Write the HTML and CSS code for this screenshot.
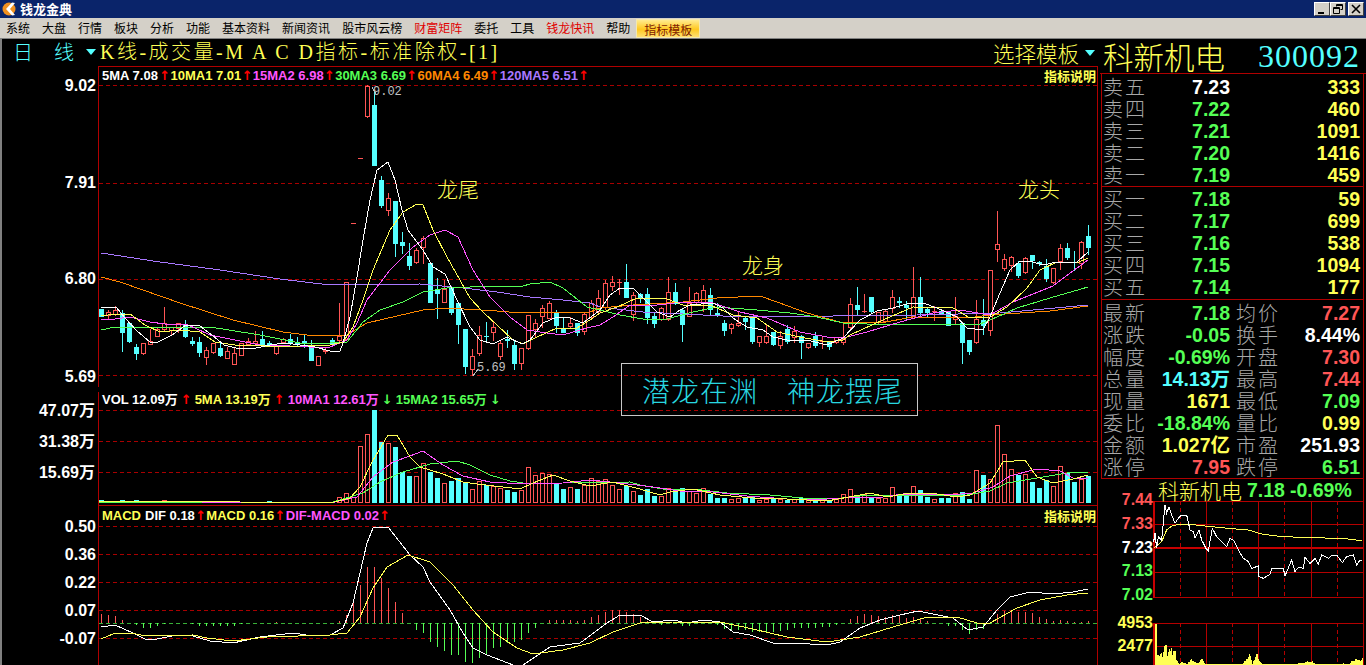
FILE: index.html
```html
<!DOCTYPE html>
<html lang="zh-CN">
<head>
<meta charset="utf-8">
<title>钱龙金典</title>
<link rel="stylesheet" href="styles.css">
</head>
<body>
<div class="app">
  <header class="titlebar">
    <svg class="logo" width="14" height="16" viewBox="0 0 14 16"><circle cx="7" cy="8" r="6.5" fill="#f09020"/><path d="M10 1.5 L4 8 L10 14.5 L13 14 L8 8 L13 2 Z" fill="#fff"/></svg>
    <span class="apptitle">钱龙金典</span>
    <div class="winbtns">
      <span class="winbtn"><svg width="10" height="10" viewBox="0 0 10 10"><rect x="1" y="8" width="6" height="2" fill="#000"/></svg></span>
      <span class="winbtn"><svg width="10" height="10" viewBox="0 0 10 10"><path d="M3.5 2.5V.5h6v5h-2M.5 3.5h6v6h-6zM.5 4.5h6M3.5 1.5h6" fill="none" stroke="#000"/></svg></span>
      <span class="winbtn wingap"><svg width="10" height="10" viewBox="0 0 10 10"><path d="M1 1L9 9M9 1L1 9" stroke="#000" stroke-width="1.6"/></svg></span>
    </div>
  </header>
  <nav class="menubar">
    <span>系统</span><span>大盘</span><span>行情</span><span>板块</span><span>分析</span><span>功能</span><span>基本资料</span><span>新闻资讯</span><span>股市风云榜</span><span class="hot">财富矩阵</span><span>委托</span><span>工具</span><span class="hot">钱龙快讯</span><span>帮助</span><span class="tplbtn">指标模板</span>
  </nav>
  <main class="main">
    <section class="left">
      <div class="charthead">
        <span class="period"><span>日</span><span>线</span></span>
        <i class="tri"></i>
        <span class="charttitle">K线-成交量-M A C D指标-标准除权-[1]</span>
        <span class="tplpick">选择模板</span>
        <i class="tri tri-r"></i>
      </div>
      <div class="pane pane-k">
        <svg id="kline" class="plot" width="1098" height="326" viewBox="0 66 1098 326"></svg>
        <span class="tick" style="top:10px">9.02</span>
        <span class="tick" style="top:107px">7.91</span>
        <span class="tick" style="top:203px">6.80</span>
        <span class="tick" style="top:301px">5.69</span>
        <div class="legend legend-k">
          <span class="c-w">5MA 7.08</span><b class="up">↑</b>
          <span class="c-y">10MA1 7.01</span><b class="up">↑</b>
          <span class="c-m">15MA2 6.98</span><b class="up">↑</b>
          <span class="c-g">30MA3 6.69</span><b class="up">↑</b>
          <span class="c-o">60MA4 6.49</span><b class="up">↑</b>
          <span class="c-p">120MA5 6.51</span><b class="up">↑</b>
        </div>
        <span class="explain explain-k">指标说明</span>
        <span class="extreme ext-hi">9.02</span>
        <span class="extreme ext-lo">5.69</span>
        <span class="note note-tail">龙尾</span>
        <span class="note note-body">龙身</span>
        <span class="note note-head">龙头</span>
        <div class="banner"><span>潜龙在渊</span><span>神龙摆尾</span></div>
      </div>
      <div class="pane pane-v">
        <svg id="vol" class="plot" width="1098" height="114" viewBox="0 392 1098 114"></svg>
        <span class="tick" style="top:9px">47.07万</span>
        <span class="tick" style="top:40px">31.38万</span>
        <span class="tick" style="top:71px">15.69万</span>
        <div class="legend legend-v">
          <span class="c-w">VOL 12.09万</span><b class="up">↑</b>
          <span class="c-y">5MA 13.19万</span><b class="up">↑</b>
          <span class="c-m">10MA1 12.61万</span><b class="dn">↓</b>
          <span class="c-g">15MA2 15.65万</span><b class="dn">↓</b>
        </div>
      </div>
      <div class="pane pane-m">
        <svg id="macd" class="plot" width="1098" height="159" viewBox="0 506 1098 159"></svg>
        <span class="tick" style="top:11px">0.50</span>
        <span class="tick" style="top:39px">0.36</span>
        <span class="tick" style="top:67px">0.22</span>
        <span class="tick" style="top:95px">0.07</span>
        <span class="tick" style="top:123px">-0.07</span>
        <div class="legend legend-m">
          <span class="c-y">MACD</span><span class="c-w">DIF 0.18</span><b class="up">↑</b>
          <span class="c-y">MACD 0.16</span><b class="up">↑</b>
          <span class="c-m">DIF-MACD 0.02</span><b class="up">↑</b>
        </div>
        <span class="explain explain-m">指标说明</span>
      </div>
    </section>
    <aside class="right">
      <div class="stockhead"><span class="stockname">科新机电</span><span class="stockcode">300092</span></div>
      <div class="quote q-sell">
        <div class="row"><span class="lb">卖五</span><span class="px c-w">7.23</span><span class="qty c-y">333</span></div>
        <div class="row"><span class="lb">卖四</span><span class="px c-g">7.22</span><span class="qty c-y">460</span></div>
        <div class="row"><span class="lb">卖三</span><span class="px c-g">7.21</span><span class="qty c-y">1091</span></div>
        <div class="row"><span class="lb">卖二</span><span class="px c-g">7.20</span><span class="qty c-y">1416</span></div>
        <div class="row"><span class="lb">卖一</span><span class="px c-g">7.19</span><span class="qty c-y">459</span></div>
      </div>
      <div class="quote q-buy">
        <div class="row"><span class="lb">买一</span><span class="px c-g">7.18</span><span class="qty c-y">59</span></div>
        <div class="row"><span class="lb">买二</span><span class="px c-g">7.17</span><span class="qty c-y">699</span></div>
        <div class="row"><span class="lb">买三</span><span class="px c-g">7.16</span><span class="qty c-y">538</span></div>
        <div class="row"><span class="lb">买四</span><span class="px c-g">7.15</span><span class="qty c-y">1094</span></div>
        <div class="row"><span class="lb">买五</span><span class="px c-g">7.14</span><span class="qty c-y">177</span></div>
      </div>
      <div class="quote q-info">
        <div class="row"><span class="lb">最新</span><span class="px c-g">7.18</span><span class="lb lb2">均价</span><span class="px c-r">7.27</span></div>
        <div class="row"><span class="lb">涨跌</span><span class="px c-g">-0.05</span><span class="lb lb2">换手</span><span class="px c-w">8.44%</span></div>
        <div class="row"><span class="lb">幅度</span><span class="px c-g">-0.69%</span><span class="lb lb2">开盘</span><span class="px c-r">7.30</span></div>
        <div class="row"><span class="lb">总量</span><span class="px c-c">14.13万</span><span class="lb lb2">最高</span><span class="px c-r">7.44</span></div>
        <div class="row"><span class="lb">现量</span><span class="px c-y">1671</span><span class="lb lb2">最低</span><span class="px c-g">7.09</span></div>
        <div class="row"><span class="lb">委比</span><span class="px c-g">-18.84%</span><span class="lb lb2">量比</span><span class="px c-y">0.99</span></div>
        <div class="row"><span class="lb">金额</span><span class="px c-y">1.027亿</span><span class="lb lb2">市盈</span><span class="px c-w">251.93</span></div>
        <div class="row"><span class="lb">涨停</span><span class="px c-r">7.95</span><span class="lb lb2">跌停</span><span class="px c-g">6.51</span></div>
      </div>
      <div class="mini">
        <div class="minihead"><span class="mininame">科新机电</span><span class="c-g miniprice">7.18</span><span class="c-g miniprice">-0.69%</span></div>
        <svg id="minichart" class="plot" width="268" height="186" viewBox="1098 479 268 186"></svg>
        <span class="minitick c-r" style="top:11px">7.44</span>
        <span class="minitick c-r" style="top:35px">7.33</span>
        <span class="minitick c-w" style="top:59px">7.23</span>
        <span class="minitick c-g" style="top:82px">7.13</span>
        <span class="minitick c-g" style="top:106px">7.02</span>
        <span class="minitick c-y" style="top:134px">4953</span>
        <span class="minitick c-y" style="top:157px">2477</span>
      </div>
    </aside>
  </main>
</div>
<script src="chart.js"></script>
</body>
</html>
```
FILE: styles.css
```css
* { box-sizing: border-box; }
html, body { margin: 0; padding: 0; background: #000; overflow: hidden; }
body { font-family: "Liberation Sans", "Noto Sans CJK SC", sans-serif; }
.app { width: 1366px; height: 665px; display: flex; flex-direction: column; overflow: hidden; }

.titlebar { height: 18px; background: #0a246a; display: flex; align-items: center; padding-left: 2px; }
.logo { margin-right: 4px; }
.apptitle { color: #fff; font: bold 13px/18px "Noto Sans CJK SC", sans-serif; }
.winbtns { margin-left: auto; display: flex; gap: 0; padding-right: 2px; }
.winbtn { width: 16px; height: 14px; background: #d4d0c8; display: flex; align-items: center; justify-content: center; border: 1px solid; border-color: #fff #404040 #404040 #fff; }
.wingap { margin-left: 2px; }

.menubar { height: 20px; background: #d4d0c8; display: flex; align-items: center; padding-left: 6px; gap: 12px; font: 12px/20px "Noto Sans CJK SC", sans-serif; color: #000; }
.menubar .hot { color: #e00000; }
.menubar .tplbtn { margin-left: -6px; padding: 0 7px; height: 19px; line-height: 19px; color: #802000; background: linear-gradient(#ffeb90, #ffc820 55%, #ffe070); border: 1px solid #f4e8b0; }

.main { flex: 1; display: flex; min-height: 0; box-shadow: inset 2px 1px 0 #808080; }
.left { width: 1098px; flex: none; display: flex; flex-direction: column; }
.right { width: 268px; flex: none; display: flex; flex-direction: column; }

.charthead { height: 28px; display: flex; align-items: center; font-family: "Noto Sans CJK SC", sans-serif; }
.period { width: 86px; padding-left: 13px; display: flex; gap: 21px; color: #55ffff; font-size: 20px; font-weight: 300; line-height: 24px; flex: none; }
.tri { width: 0; height: 0; border: 5px solid transparent; border-top: 6px solid #55ffff; border-bottom: 0; flex: none; }
.charttitle { margin-left: 4px; color: #ffff55; font-family: "Liberation Serif", "Noto Sans CJK SC", serif; font-size: 20px; line-height: 24px; white-space: nowrap; font-weight: 300; letter-spacing: 2.5px; }
.tplpick { margin: 2px 6px 0 auto; color: #ffff55; font-size: 21.5px; font-weight: 300; line-height: 24px; }
.tri-r { margin: 2px 3px 0 0; }

.pane { position: relative; overflow: hidden; flex: none; }
.pane-k { height: 326px; overflow: visible; z-index: 1; }
.pane-v { height: 114px; }
.pane-m { height: 159px; }
.plot { display: block; shape-rendering: crispEdges; }
.tick { position: absolute; right: 1002px; color: #fff; font: bold 16px/20px "Liberation Sans", "Noto Sans CJK SC", sans-serif; white-space: nowrap; }
.pane-v .tick { right: 1003px; }

.legend { position: absolute; left: 102px; display: flex; align-items: center; font: bold 13px/16px "Liberation Sans", "Noto Sans CJK SC", sans-serif; white-space: nowrap; }
.legend-k { top: 2px; }
.legend-v { top: 0; }
.legend-m { top: 2px; }
.legend b { flex: none; text-align: center; font: bold 13px/14px "DejaVu Sans", sans-serif; overflow: hidden; }
.legend-k b { width: 11.5px; }
.legend-k span:first-child { min-width: 57px; }
.legend-v b { width: 17px; }
.legend-m b { width: 11.5px; }
.legend-m .c-w { margin-left: 4px; }
.up { color: #ff0000; }
.dn { color: #55ff55; }
.explain { position: absolute; right: 2px; color: #ffff55; font: bold 13px/16px "Noto Sans CJK SC", sans-serif; }
.explain-k { top: 2px; }
.explain-m { top: 2px; }
.extreme { position: absolute; color: #c0c0c0; font: 12px/14px "Liberation Mono", monospace; }
.ext-hi { left: 373px; top: 19px; }
.ext-lo { left: 477px; top: 295px; }
.note { position: absolute; color: #ffff55; font: 300 21px/26px "Noto Sans CJK SC", sans-serif; }
.note-tail { left: 437px; top: 109px; }
.note-body { left: 742px; top: 185px; }
.note-head { left: 1018px; top: 109px; }
.banner { position: absolute; left: 621px; top: 297px; width: 297px; height: 53px; border: 1px solid #c8c8c8; display: flex; gap: 29px; padding-left: 20px; align-items: center; color: #28d8e0; font: 300 28px/50px "Noto Sans CJK SC", sans-serif; letter-spacing: 1px; }

.c-w { color: #fff; }
.c-y { color: #ffff55; }
.c-m { color: #ff55ff; }
.c-g { color: #55ff55; }
.c-o { color: #ff8800; }
.c-p { color: #a878ff; }
.c-r { color: #ff5555; }
.c-c { color: #55ffff; }

.stockhead { height: 36px; border-bottom: 1px solid #b00000; margin-left: 2px; padding: 0 6px 0 3px; display: flex; align-items: center; justify-content: space-between; }
.stockname { color: #ffff55; font: 300 30.5px/34px "Noto Sans CJK SC", sans-serif; white-space: nowrap; }
.stockcode { color: #55ffff; font: 32px/34px "Liberation Serif", serif; letter-spacing: 1px; }

.quote { margin: 0 2px 0 3px; border: 1px solid #b00000; border-top: 0; padding-left: 1px; flex: none; }
.q-sell { padding-top: 2px; }
.q-buy { padding-top: 1px; padding-bottom: 1px; }
.q-info { padding-top: 2px; }
.row { display: grid; grid-template-columns: 44px 83px 50px 80px; height: 22px; line-height: 22px; align-items: center; }
.lb { color: #a8a8a8; font: 300 20px/22px "Noto Sans CJK SC", sans-serif; letter-spacing: 2px; white-space: nowrap; }
.lb2 { padding-left: 6px; }
.px { font: bold 19.5px/22px "Liberation Sans", "Noto Sans CJK SC", sans-serif; text-align: right; white-space: nowrap; }
.qty { font: bold 19.5px/22px "Liberation Sans", sans-serif; text-align: right; grid-column: 3 / 5; }

.mini { position: relative; flex: 1; min-height: 0; }
.minihead { position: absolute; left: 60px; top: 0; height: 23px; display: flex; align-items: center; gap: 5px; white-space: nowrap; }
.mininame { color: #ffff55; font: 300 21px/23px "Noto Sans CJK SC", sans-serif; }
.miniprice { font: bold 19.5px/23px "Liberation Sans", sans-serif; }
.minitick { position: absolute; right: 213px; font: bold 16px/20px "Liberation Sans", sans-serif; }
```
FILE: chart.js
```js
(function () {
  var NS = 'http://www.w3.org/2000/svg';
  var RED = '#ff5555', CYAN = '#55ffff', LINE = '#b00000', DASH = '#a80000';
  var WHITE = '#ffffff', YEL = '#ffff55', MAG = '#ff55ff', GRN = '#55ff55', ORG = '#ff8800', PUR = '#a878ff';

  // [wick top, body top, body bottom, wick bottom, up?] in chart pixels
  var candles = [
    [309,309,317,317,0],[310,312,316,320,1],[306,310,315,316,1],[310,313,333,352,0],[323,323,342,343,0],[344,347,354,360,0],
    [343,343,354,355,1],[329,341,345,345,1],[328,329,337,337,1],[307,323,330,331,1],[327,327,331,335,1],[323,323,329,333,1],
    [320,325,337,338,0],[337,341,344,346,0],[337,342,353,357,0],[347,350,358,365,1],[343,343,353,354,1],[343,348,356,357,0],
    [347,351,359,359,1],[348,353,365,365,1],[343,343,356,356,1],[338,341,345,345,1],[331,341,344,345,1],[331,339,345,347,0],
    [341,343,346,347,0],[345,346,354,355,1],[338,339,343,343,1],[334,339,343,345,0],[337,342,345,347,0],[335,341,343,348,0],
    [340,345,361,361,0],[356,356,366,366,1],[347,350,352,354,1],[338,340,345,346,0],[303,336,341,342,1],[282,282,340,341,1],
    [223,223,224,224,1],[158,158,159,159,1],[85,86,117,118,1],[90,105,166,166,0],[176,180,206,208,0],[193,198,211,216,1],
    [201,201,244,257,0],[232,242,246,254,0],[243,256,266,270,0],[248,250,263,264,1],[236,238,248,264,1],[263,263,303,303,0],
    [278,289,294,319,0],[280,289,303,303,1],[288,288,313,315,0],[303,303,325,344,0],[329,329,367,374,0],[349,356,370,376,1],
    [326,335,354,356,1],[322,336,337,343,0],[322,327,333,341,1],[340,343,357,360,1],[330,339,341,348,0],[341,345,364,370,0],
    [348,348,364,370,1],[315,315,349,350,1],[319,323,330,337,1],[305,308,317,328,1],[301,303,319,319,1],[310,313,326,333,0],
    [318,328,333,333,0],[317,323,327,329,1],[323,323,333,336,0],[313,314,332,335,1],[300,303,318,320,1],[290,298,312,313,1],
    [280,283,308,310,1],[276,282,287,291,1],[279,282,283,295,1],[264,282,298,298,0],[292,295,315,321,1],[293,294,299,303,0],
    [288,294,318,324,0],[313,316,324,328,0],[307,308,320,321,1],[277,292,320,321,1],[283,292,304,305,0],[308,310,325,342,0],
    [287,303,317,317,1],[292,293,303,304,1],[285,290,304,312,1],[288,295,310,315,0],[303,313,316,317,0],[320,323,331,336,0],
    [323,324,329,334,1],[312,323,326,327,1],[317,318,322,330,0],[317,317,342,344,0],[336,336,343,347,1],[325,336,343,344,1],
    [332,332,345,346,0],[331,336,346,349,1],[325,329,342,344,0],[326,331,338,343,1],[335,336,343,359,0],[343,343,348,349,1],
    [332,336,346,348,0],[336,341,342,349,1],[341,342,347,350,0],[337,337,343,344,1],[324,339,343,345,1],[298,304,328,329,1],
    [287,305,310,315,0],[294,311,312,313,1],[297,297,312,313,0],[312,312,323,324,1],[310,311,322,323,1],[290,297,309,313,1],
    [297,301,303,308,0],[301,305,308,320,0],[267,297,317,317,1],[277,297,313,317,0],[307,309,313,317,0],[306,311,312,321,1],
    [310,311,314,315,0],[312,312,326,326,0],[297,316,320,325,1],[323,323,343,364,0],[340,340,352,355,0],[300,319,343,344,1],
    [299,320,326,335,0],[270,270,331,336,1],[211,244,250,262,1],[254,259,269,271,1],[256,257,266,272,1],[261,263,276,278,0],
    [257,258,273,274,1],[255,255,261,269,0],[261,262,264,266,0],[259,266,279,282,0],[268,268,283,284,1],[244,248,262,270,1],
    [243,248,258,260,0],[251,262,263,271,0],[241,242,264,269,1],[225,236,248,255,0]
  ];

  var volTops = [500,501,501,500,501,500,501,501,501,500,501,501,501,501,501,502,502,502,502,502,502,502,502,502,501,502,502,502,502,502,502,502,502,502,
    497,493,497,446,434,410,442,443,447,472,476,476,463,472,478,483,481,478,483,489,481,485,486,488,490,492,490,467,475,473,474,484,489,487,489,485,478,481,479,485,
    489,486,491,495,489,496,496,488,489,488,491,493,488,494,498,498,499,498,498,496,500,499,499,499,500,499,498,500,499,500,500,499,494,489,495,
    494,497,498,498,487,496,494,486,490,497,499,498,498,493,492,499,470,475,479,425,454,469,475,474,482,488,480,486,466,473,482,479,476];

  var macdEnds = [614,615,616,620,623,625,628,628,626,624,623,623,623,624,626,626,626,626,626,626,624,623,623,623,623,622,623,623,623,623,623,623,623,623,
    621,615,600,585,567,567,578,588,602,613,623,630,633,642,647,651,655,655,662,663,658,655,648,647,643,642,640,633,628,623,620,620,620,620,621,620,617,615,612,610,610,
    612,614,617,621,623,625,623,623,626,626,623,623,623,625,629,630,630,630,632,632,632,632,631,630,628,628,628,628,627,627,625,623,619,616,614,615,616,617,615,616,618,617,618,621,623,623,626,626,630,634,630,629,624,614,611,610,612,612,613,617,619,621,620,621,622,622,621];

  var ma = [
    [PUR,[101,253,160,262,220,270,280,279,330,285,420,284,463,288,497,292,530,297,563,300,590,303,600,307,643,312,723,316,833,316,917,315,1000,313,1088,305]],
    [ORG,[101,277,120,282,143,290,180,303,233,320,283,332,307,335,347,335,367,323,397,316,423,310,447,308,497,311,520,313,590,312,600,308,633,305,683,302,717,298,760,296,777,302,807,313,840,322,880,323,913,317,967,318,990,315,1050,311,1088,306]],
    [GRN,[101,330,115,327,150,327,210,327,260,335,300,343,330,343,347,342,363,322,380,310,403,302,423,292,447,288,470,287,497,286,523,286,530,284,550,282,563,288,587,307,600,310,620,315,643,319,667,319,693,312,717,307,757,310,790,313,817,317,843,323,867,324,930,324,980,324,997,317,1017,308,1050,298,1088,287]],
    [MAG,[101,320,115,319,130,317,150,322,165,324,185,324,195,328,210,335,235,340,260,345,290,346,310,347,330,347,347,340,357,323,367,300,390,270,413,247,430,235,445,230,458,237,473,270,490,297,510,317,527,330,547,333,563,335,587,328,600,325,613,317,630,305,657,305,683,302,710,302,740,312,767,318,800,332,827,337,847,337,867,332,900,322,933,313,960,310,990,315,1013,302,1053,286,1077,268,1088,260]],
    [YEL,[101,316,115,314,130,314,145,325,160,332,180,330,200,332,215,342,235,345,255,345,275,347,300,346,330,345,343,342,353,327,363,300,373,270,390,230,403,212,417,204,423,205,433,230,447,257,460,280,470,298,483,312,497,325,513,340,523,344,537,337,557,328,577,328,590,320,600,313,617,307,637,298,667,299,683,305,710,305,733,315,757,318,777,332,800,337,827,342,843,340,850,335,883,320,913,307,953,308,970,318,990,317,1007,307,1027,288,1040,270,1057,262,1077,263,1088,258]],
    [WHITE,[101,307,116,307,125,318,137,331,150,342,158,342,172,335,186,325,200,326,212,335,224,345,240,349,256,348,270,345,285,343,300,345,315,347,330,351,340,351,343,343,350,317,357,277,363,240,370,200,377,170,388,162,395,180,402,210,408,230,423,250,433,267,445,274,457,300,470,327,480,340,493,344,507,337,522,344,530,340,543,323,557,317,570,318,583,323,600,310,610,295,620,288,633,288,643,298,657,312,670,317,680,310,690,305,713,303,723,308,733,318,747,327,763,330,773,337,787,340,807,340,827,345,843,338,860,320,877,311,893,308,910,303,923,303,937,308,957,317,967,328,983,330,990,317,1000,293,1010,270,1020,261,1033,262,1043,265,1057,262,1077,262,1088,252]]
  ];

  var volMa = [
    [GRN,[99,502,330,503,363,493,380,482,403,472,430,464,457,461,470,465,490,475,510,481,530,484,563,483,630,482,640,485,663,489,693,489,727,493,770,495,803,498,833,499,860,496,890,495,967,495,990,491,1007,483,1037,478,1073,472,1088,473]],
    [MAG,[99,501,200,502,330,503,357,497,373,477,393,462,410,456,423,451,443,465,463,476,490,482,523,484,563,483,590,480,620,483,653,487,680,491,713,492,747,496,787,499,827,499,860,497,883,497,903,494,950,495,973,493,993,487,1010,476,1037,469,1060,471,1073,478,1088,479]],
    [YEL,[99,501,180,501,240,502,330,503,350,498,360,487,372,462,388,435,397,435,410,457,420,467,443,474,463,482,477,484,503,487,520,489,533,483,553,475,570,481,590,486,613,482,620,484,640,489,660,495,670,492,693,489,720,495,753,498,787,499,827,501,860,495,870,493,887,497,910,493,937,494,957,497,970,495,990,483,1003,462,1025,460,1037,477,1053,483,1073,479,1088,475]]
  ];

  var dif = [101,627,115,625,133,633,147,640,157,639,177,635,193,636,210,641,233,643,260,637,293,633,313,636,330,635,343,628,353,603,367,543,373,528,388,527,410,555,423,567,430,582,450,610,463,633,473,648,487,655,513,665,523,665,550,647,580,643,607,623,620,615,640,615,653,622,673,620,687,623,703,620,720,622,733,632,750,635,773,643,793,643,827,645,840,642,860,628,880,620,900,615,918,611,953,618,968,630,983,627,997,610,1010,597,1030,592,1053,594,1073,592,1088,589];
  var dea = [101,639,113,634,130,633,147,636,193,635,207,638,233,641,267,637,330,635,347,633,360,617,373,588,387,567,408,555,430,562,453,585,473,610,493,632,517,648,533,654,563,650,590,643,613,632,640,623,673,622,720,622,753,629,787,637,827,642,860,637,893,627,927,617,957,617,977,623,990,623,1017,608,1040,600,1067,595,1088,593];

  function el(name, attrs, parent) {
    var n = document.createElementNS(NS, name);
    for (var k in attrs) n.setAttribute(k, attrs[k]);
    if (parent) parent.appendChild(n);
    return n;
  }
  function seg(svg, x1, y1, x2, y2, color, dash, w) {
    var a = { x1: x1, y1: y1, x2: x2, y2: y2, stroke: color, 'stroke-width': w || 1 };
    if (dash) a['stroke-dasharray'] = dash;
    return el('line', a, svg);
  }
  function poly(svg, pts, color, w) {
    var s = '';
    for (var i = 0; i < pts.length; i += 2) s += pts[i] + ',' + pts[i + 1] + ' ';
    el('polyline', { points: s, fill: 'none', stroke: color, 'stroke-width': w || 1 }, svg);
  }
  function hollow(svg, x, top, bot) {
    el('rect', { x: x + 0.5, y: top + 0.5, width: 4, height: Math.max(bot - top - 1, 0), fill: '#000', stroke: RED }, svg);
  }
  function dashes(svg, ys) {
    ys.forEach(function (y) { seg(svg, 99, y + 0.5, 1097, y + 0.5, DASH, '4 3'); });
  }

  // K-line pane
  var k = document.getElementById('kline');
  seg(k, 98.5, 66, 98.5, 387, LINE);
  seg(k, 98, 66.5, 1098, 66.5, LINE);
  seg(k, 1097.5, 66, 1097.5, 392, LINE);
  dashes(k, [85, 183, 279, 375]);
  candles.forEach(function (c, i) {
    var x = 99 + 7 * i, mid = x + 2.5;
    if (c[4]) {
      if (c[2] - c[1] <= 1) { seg(k, x, c[1] + 0.5, x + 5, c[1] + 0.5, RED); }
      else { hollow(k, x, c[1], c[2]); }
      if (c[0] < c[1]) seg(k, mid, c[0], mid, c[1], RED);
      if (c[3] > c[2]) seg(k, mid, c[2], mid, c[3], RED);
    } else {
      seg(k, mid, c[0], mid, c[3], CYAN);
      el('rect', { x: x, y: c[1], width: 5, height: Math.max(c[2] - c[1], 1), fill: CYAN }, k);
    }
  });
  ma.forEach(function (m) { poly(k, m[1], m[0]); });
  poly(k, [372, 87, 376, 94], '#c0c0c0');
  poly(k, [473, 376, 478, 369], '#c0c0c0');

  // Volume pane
  var v = document.getElementById('vol');
  seg(v, 98.5, 392, 98.5, 506, LINE);
  seg(v, 1097.5, 392, 1097.5, 506, LINE);
  seg(v, 98, 505.5, 1098, 505.5, LINE, null, 2);
  dashes(v, [410, 441, 472]);
  volTops.forEach(function (t, i) {
    var x = 99 + 7 * i;
    if (candles[i][4]) hollow(v, x, t, 503);
    else el('rect', { x: x, y: t, width: 5, height: 503 - t, fill: CYAN }, v);
  });
  volMa.forEach(function (m) { poly(v, m[1], m[0]); });

  // MACD pane
  var m = document.getElementById('macd');
  seg(m, 98.5, 506, 98.5, 665, LINE);
  seg(m, 1097.5, 506, 1097.5, 665, LINE);
  dashes(m, [526, 554, 582, 610, 638]);
  seg(m, 99, 623.5, 1097, 623.5, '#38b038', '4 3');
  macdEnds.forEach(function (y, i) {
    if (y === 623) return;
    var mid = 99 + 7 * i + 2.5;
    seg(m, mid, Math.min(y, 623), mid, Math.max(y, 623), y < 623 ? RED : GRN);
  });
  poly(m, dif, WHITE);
  poly(m, dea, YEL);

  // Intraday mini chart: points measured from 1095,480 at 3x
  function zoomed(a) {
    var out = [];
    for (var i = 0; i < a.length; i += 2) out.push(1095 + a[i] / 3, 480 + a[i + 1] / 3);
    return out;
  }
  var q = document.getElementById('minichart');
  var MINI = '#b40000';
  seg(q, 1154, 501.5, 1363, 501.5, MINI);
  seg(q, 1154, 524.5, 1363, 524.5, MINI);
  seg(q, 1154, 548, 1363, 548, '#c80000', null, 2);
  seg(q, 1154, 572.5, 1363, 572.5, MINI);
  seg(q, 1154, 597.5, 1363, 597.5, MINI);
  seg(q, 1154, 623.5, 1363, 623.5, MINI);
  seg(q, 1154, 646.5, 1363, 646.5, MINI);
  seg(q, 1154, 501, 1154, 598, '#c80000', null, 2);
  seg(q, 1154, 623, 1154, 665, '#c80000', null, 2);
  seg(q, 1363.5, 479, 1363.5, 665, MINI);
  [1206, 1258, 1311].forEach(function (x) {
    seg(q, x + 0.5, 501, x + 0.5, 598, MINI);
    seg(q, x + 0.5, 623, x + 0.5, 665, MINI);
  });
  [1180, 1232, 1284, 1337].forEach(function (x) {
    seg(q, x + 0.5, 501, x + 0.5, 598, MINI, '4 3');
    seg(q, x + 0.5, 623, x + 0.5, 665, MINI, '4 3');
  });
  var shape = [176,555,178,432,183,432,184,510,190,520,195,505,200,520,208,495,212,470,216,520,222,500,228,480,232,520,238,495,242,530,250,550,255,548,265,545,275,552,285,535,295,540,305,550,320,535,330,552,350,552,380,550,440,552,465,518,470,552,485,515,492,540,500,552,600,552,650,540,660,552,760,550,780,535,795,540,805,522];
  function shapeAt(X) {
    for (var i = 0; i < shape.length - 2; i += 2) {
      if (X <= shape[i + 2]) {
        var t = (X - shape[i]) / Math.max(shape[i + 2] - shape[i], 1);
        return shape[i + 1] + (shape[i + 3] - shape[i + 1]) * t;
      }
    }
    return 552;
  }
  for (var x = 1155; x < 1363; x++) {
    var X = (x - 1095) * 3;
    var top = 480 + shapeAt(X) / 3;
    var jag = (Math.sin(x * 12.9898) * 43758.5453) % 1;
    var h = (665 - top) * (0.65 + 0.35 * Math.abs(jag));
    if (x < 1157) h = 665 - top;
    seg(q, x + 0.5, 665 - h, x + 0.5, 665, YEL);
  }
  poly(q, zoomed([176,205,200,185,215,150,232,137,260,132,285,133,330,138,400,145,460,150,500,162,560,170,660,173,750,176,800,182]), YEL);
  poly(q, zoomed([176,185,180,160,185,205,190,170,200,180,210,75,215,100,222,80,232,110,240,130,250,115,260,105,275,105,285,150,295,155,300,175,312,150,320,180,333,205,340,212,352,145,365,170,380,185,395,200,405,175,415,180,430,210,445,235,460,245,470,265,490,258,492,290,505,295,525,283,530,265,565,265,570,288,590,240,600,275,610,262,625,265,630,232,645,250,660,235,670,252,680,225,700,235,712,225,725,225,742,248,755,230,775,225,785,255,795,240,800,242]), WHITE);
})();
```
